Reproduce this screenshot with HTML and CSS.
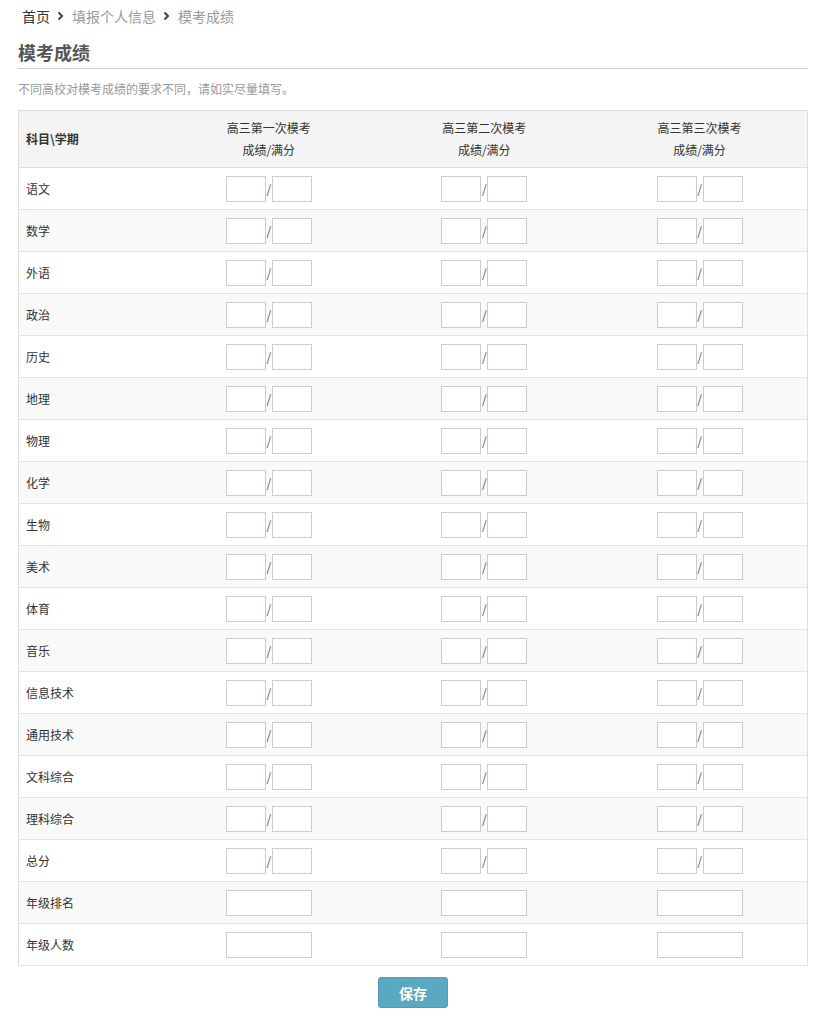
FILE: index.html
```html
<!DOCTYPE html>
<html lang="zh-CN">
<head>
<meta charset="utf-8">
<title>模考成绩</title>
<link rel="stylesheet" href="styles.css">
</head>
<body>
<div class="page">
  <nav class="crumbs">
    <span class="crumb home">首页</span>
    <svg class="chev" width="7" height="10" viewBox="0 0 7 10"><path d="M1.5 1.5 L5 5 L1.5 8.5" fill="none" stroke="#444" stroke-width="2"/></svg>
    <span class="crumb">填报个人信息</span>
    <svg class="chev" width="7" height="10" viewBox="0 0 7 10"><path d="M1.5 1.5 L5 5 L1.5 8.5" fill="none" stroke="#444" stroke-width="2"/></svg>
    <span class="crumb">模考成绩</span>
  </nav>
  <h1 class="title">模考成绩</h1>
  <p class="note">不同高校对模考成绩的要求不同，请如实尽量填写。</p>
  <table class="scores">
    <thead>
      <tr>
        <th class="subj">科目\学期</th>
        <th>高三第一次模考<br>成绩/满分</th>
        <th>高三第二次模考<br>成绩/满分</th>
        <th>高三第三次模考<br>成绩/满分</th>
      </tr>
    </thead>
    <tbody id="rows"></tbody>
  </table>
  <div class="actions"><button class="save">保存</button></div>
</div>
<script src="app.js"></script>
</body>
</html>
```
FILE: app.js
```js
var subjects = ["语文","数学","外语","政治","历史","地理","物理","化学","生物","美术","体育","音乐","信息技术","通用技术","文科综合","理科综合","总分"];
var single = ["年级排名","年级人数"];
var tb = document.getElementById("rows");
var html = "";
subjects.forEach(function (s) {
  html += '<tr><td class="subj">' + s + '</td>';
  for (var i = 0; i < 3; i++) {
    html += '<td><div class="pair"><input class="box"><span class="slash">/</span><input class="box"></div></td>';
  }
  html += '</tr>';
});
single.forEach(function (s) {
  html += '<tr><td class="subj">' + s + '</td>';
  for (var i = 0; i < 3; i++) {
    html += '<td><div class="pair"><input class="box wide"></div></td>';
  }
  html += '</tr>';
});
tb.innerHTML = html;
```
FILE: styles.css
```css
html, body {
  margin: 0;
  padding: 0;
  background: #fff;
}
body {
  font-family: "Noto Sans CJK SC", "Microsoft YaHei", sans-serif;
  color: #333;
}
.page {
  padding: 0 15px 0 18px;
  width: 790px;
}
.crumbs {
  display: flex;
  align-items: center;
  height: 18px;
  margin-top: 7px;
  padding-left: 4px;
  font-size: 14px;
  line-height: 18px;
}
.crumb {
  color: #999;
}
.crumb.home {
  color: #333;
}
.chev {
  margin: 0 8px 0 7px;
}
.title {
  margin: 15px 0 0;
  font-size: 18px;
  line-height: 24px;
  font-weight: bold;
  color: #555;
  padding-bottom: 4px;
  border-bottom: 1px solid #ccc;
}
.note {
  margin: 12px 0 0;
  font-size: 12px;
  line-height: 16px;
  color: #999;
}
.scores {
  margin-top: 13px;
  width: 790px;
  border-collapse: collapse;
  border: 1px solid #ddd;
  table-layout: fixed;
}
.scores th {
  height: 56px;
  padding: 0;
  background: #f4f4f4;
  font-size: 12px;
  line-height: 22px;
  font-weight: normal;
  color: #333;
  text-align: center;
  border-bottom: 1px solid #ddd;
}
.scores th.subj {
  width: 135px;
  text-align: left;
  padding-left: 7px;
  font-weight: bold;
}
.scores td {
  height: 41px;
  padding: 0;
  text-align: center;
  border-bottom: 1px solid #e3e3e3;
  font-size: 12px;
}
.scores tbody tr:nth-child(even) td {
  background: #f9f9f9;
}
.scores td.subj {
  text-align: left;
  padding-left: 7px;
  color: #333;
}
.pair {
  display: flex;
  justify-content: center;
  align-items: center;
}
.box {
  box-sizing: border-box;
  width: 40px;
  height: 26px;
  margin: 0;
  padding: 0 4px;
  border: 1px solid #ccc;
  background: #fff;
  font-size: 12px;
}
.box.wide {
  width: 86px;
}
.slash {
  width: 6px;
  font-size: 12px;
  line-height: 14px;
  margin-top: 0;
  color: #555;
  text-align: center;
}
.actions {
  display: flex;
  justify-content: center;
  padding-top: 11px;
}
.save {
  width: 70px;
  height: 31px;
  border: 1px solid #4c9db5;
  border-radius: 3px;
  background: #58a9c1;
  color: #fff;
  font-family: "Noto Sans CJK SC", sans-serif;
  font-size: 14px;
  font-weight: bold;
}
```
